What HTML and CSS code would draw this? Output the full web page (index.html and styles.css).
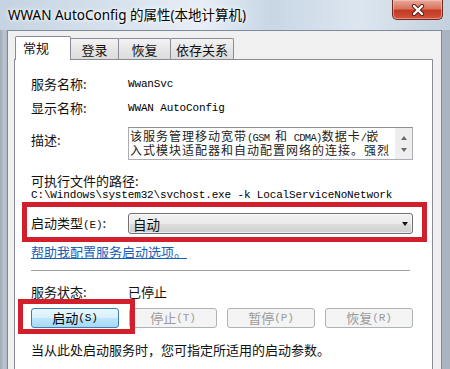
FILE: index.html
```html
<!DOCTYPE html>
<html lang="zh-CN">
<head>
<meta charset="utf-8">
<title>WWAN AutoConfig 的属性</title>
<link rel="stylesheet" href="styles.css">
</head>
<body>
<div class="window">
  <div class="titlebar">
    <span class="title">WWAN AutoConfig 的属性(本地计算机)</span>
    <div class="close">
      <svg width="14" height="12" viewBox="0 0 14 12"><path d="M3 2 L11 10 M11 2 L3 10" stroke="#5a1a14" stroke-width="4.2" stroke-linecap="round"/><path d="M3 2 L11 10 M11 2 L3 10" stroke="#ffffff" stroke-width="2.4" stroke-linecap="round"/></svg>
    </div>
  </div>
  <div class="client">
    <div class="tabs">
      <div class="tab active">常规</div>
      <div class="tab t2">登录</div>
      <div class="tab t3">恢复</div>
      <div class="tab t4">依存关系</div>
    </div>
    <div class="panel">
      <div class="row first"><span class="label">服务名称:</span><span class="mono">WwanSvc</span></div>
      <div class="row"><span class="label">显示名称:</span><span class="mono">WWAN AutoConfig</span></div>
      <div class="desc-row">
        <span class="label desc-label">描述:</span>
        <div class="desc">
          <div class="desc-text"><div class="dl">该服务管理移动宽带<span class="m">(GSM </span>和<span class="m"> CDMA)</span>数据卡<span class="m">/</span>嵌</div><div class="dl">入式模块适配器和自动配置网络的连接。强烈</div></div>
          <div class="scroll"><span class="up"></span><span class="down"></span></div>
        </div>
      </div>
      <div class="path-label">可执行文件的路径:</div>
      <div class="path mono">C:\Windows\system32\svchost.exe -k LocalServiceNoNetwork</div>
      <div class="row startup"><span class="label">启动类型<span class="m">(E)</span>:</span><div class="combo"><span>自动</span><span class="arrow"></span></div></div>
      <a class="link" href="#">帮助我配置服务启动选项。</a>
      <div class="sep"></div>
      <div class="status"><span class="label">服务状态:</span><span>已停止</span></div>
      <div class="buttons">
        <div class="btn hot">启动<span class="m">(S)</span></div>
        <div class="btn off">停止<span class="m">(T)</span></div>
        <div class="btn off">暂停<span class="m">(P)</span></div>
        <div class="btn off">恢复<span class="m">(R)</span></div>
      </div>
      <p class="hint">当从此处启动服务时，您可指定所适用的启动参数。</p>
    </div>
  </div>
  <div class="mark mark1"></div>
  <div class="mark mark2"></div>
</div>
</body>
</html>
```
FILE: styles.css
```css
* { box-sizing: border-box; }
html, body { margin: 0; padding: 0; }
body {
  width: 450px;
  height: 369px;
  overflow: hidden;
  background: #ffffff;
  font-family: "Noto Sans CJK SC", sans-serif;
  font-size: 13px;
  color: #111;
}
.window {
  position: relative;
  width: 450px;
  height: 369px;
  display: flex;
  flex-direction: column;
  background: linear-gradient(90deg, #9ea9b6 0px, #bcc6d1 4px, #aeb9c5 7px, #c9d3dd 50%, #a9b4c0 100%);
  overflow: hidden;
}
.titlebar {
  height: 30px;
  flex: none;
  display: flex;
  align-items: flex-start;
  justify-content: space-between;
  padding: 0 7px 0 8px;
  background: linear-gradient(90deg, #c5d3e2 0%, #d6e1ec 25%, #e7eef6 45%, #c8d6e5 60%, #dde6ef 80%, #c3d0de 100%);
}
.title {
  margin-top: 7px;
  font-family: "Noto Sans", "Noto Sans CJK SC", sans-serif;
  font-size: 13.5px;
  line-height: 16px;
  color: #000;
  text-shadow: 0 0 6px #ffffff, 0 0 3px #ffffff;
}
.close {
  width: 51px;
  height: 20px;
  display: flex;
  align-items: center;
  justify-content: center;
  border: 1px solid #6e2a22;
  border-top: none;
  border-radius: 0 0 5px 5px;
  background: linear-gradient(#e9a89a 0%, #d9745f 45%, #c43a22 55%, #d0543c 100%);
  box-shadow: inset 0 0 0 1px rgba(255, 210, 200, 0.5);
}
.client {
  flex: 1;
  margin: 0 8px 0 7px;
  border: 1px solid #7c8a99;
  border-bottom: none;
  background: #f0f0f0;
  padding: 5px 8px 0 6px;
  display: flex;
  flex-direction: column;
}
.tabs {
  height: 23px;
  display: flex;
  align-items: flex-end;
  padding-left: 1px;
  position: relative;
  z-index: 2;
}
.tab {
  height: 21px;
  border: 1px solid #898c95;
  border-bottom: none;
  margin-left: -1px;
  background: linear-gradient(#f3f3f3, #e6e6e6 50%, #dcdcdc);
  border-radius: 2px 2px 0 0;
  display: flex;
  align-items: center;
  justify-content: center;
  line-height: 14px;
  padding-top: 1px;
}
.tab.active {
  height: 24px;
  margin-bottom: -1px;
  margin-left: 0;
  width: 56px;
  background: #ffffff;
  z-index: 3;
  padding-top: 0;
  padding-bottom: 2px;
  justify-content: flex-start;
  padding-left: 7px;
}
.t2 { width: 49px; }
.t3 { width: 53px; }
.t4 { width: 64px; }
.panel {
  flex: 1;
  background: #ffffff;
  border: 1px solid #898c95;
  border-bottom: none;
  padding: 12px 0 0 16px;
  display: flex;
  flex-direction: column;
  align-items: flex-start;
}
.row {
  height: 24px;
  display: flex;
  align-items: center;
}
.label {
  width: 97px;
  flex: none;
  line-height: 14px;
}
.mono, .m {
  font-family: "Liberation Mono", "Noto Sans CJK SC", monospace;
  font-size: 11px;
  letter-spacing: -0.15px;
}
.mono { color: #000; }
.desc-row {
  margin-top: 7px;
  display: flex;
  align-items: flex-start;
}
.desc-label { margin-top: 6px; }
.desc {
  width: 285px;
  height: 33px;
  border: 1px solid #abadb3;
  border-top-color: #8e8f8f;
  display: flex;
}
.desc-text {
  flex: 1;
  padding: 1px 0 0 1px;
  font-size: 12px;
  letter-spacing: 1px;
  color: #222;
  white-space: nowrap;
  overflow: hidden;
}
.dl {
  height: 14px;
  line-height: 14px;
}
.desc-text .m { font-size: 10.5px; letter-spacing: -0.7px; }
.scroll {
  width: 17px;
  background: #eeeeee;
  display: flex;
  flex-direction: column;
  align-items: center;
  justify-content: space-between;
  padding: 8px 0 7px;
}
.up, .down {
  width: 0;
  height: 0;
  border-left: 3.5px solid transparent;
  border-right: 3.5px solid transparent;
}
.up { border-bottom: 4px solid #6a6a6a; }
.down { border-top: 4px solid #6a6a6a; }
.path-label {
  margin-top: 14px;
  line-height: 14px;
}
.path {
  line-height: 14px;
  white-space: nowrap;
}
.startup {
  margin-top: 11px;
  height: 21px;
}
.combo {
  width: 285px;
  height: 21px;
  border: 1px solid #707070;
  border-radius: 3px;
  background: linear-gradient(#f2f2f2 0%, #ebebeb 50%, #dddddd 51%, #cfcfcf 100%);
  display: flex;
  align-items: center;
  justify-content: space-between;
  padding: 0 4px 0 4px;
  font-size: 13.5px;
  box-shadow: inset 0 0 0 1px rgba(255, 255, 255, 0.6);
}
.arrow {
  width: 0;
  height: 0;
  border-left: 3.5px solid transparent;
  border-right: 3.5px solid transparent;
  border-top: 4px solid #111;
}
.link {
  margin-top: 11px;
  line-height: 14px;
  color: #1560b8;
  text-decoration: underline;
}
.sep {
  margin-top: 11px;
  width: 379px;
  height: 2px;
  border-top: 1px solid #a0a0a0;
  border-bottom: 1px solid #ffffff;
}
.status {
  margin-top: 13px;
  display: flex;
  line-height: 14px;
}
.buttons {
  margin-top: 9px;
  display: flex;
  gap: 10px;
}
.btn {
  width: 88px;
  height: 20px;
  border: 1px solid #707070;
  border-radius: 3px;
  display: flex;
  align-items: center;
  justify-content: center;
  line-height: 14px;
  background: linear-gradient(#f2f2f2 0%, #ebebeb 50%, #dddddd 51%, #cfcfcf 100%);
}
.btn.hot {
  border-color: #3c7fb1;
  background: linear-gradient(#eaf6fd 0%, #d9f0fc 50%, #bee6fd 51%, #a7d9f5 100%);
  color: #000;
}
.btn.off {
  border-color: #adb2b5;
  background: #f4f4f4;
  color: #9a9a9a;
}
.hint {
  margin: 15px 0 0 0;
  line-height: 14px;
}
.mark {
  position: absolute;
  border: 5px solid #d11f2b;
  z-index: 5;
}
.mark1 { left: 22px; top: 202px; width: 405px; height: 40px; }
.mark2 { left: 18px; top: 299px; width: 117px; height: 35px; }
```
